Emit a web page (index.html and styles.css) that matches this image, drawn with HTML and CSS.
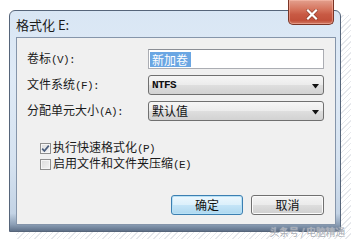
FILE: index.html
```html
<!DOCTYPE html>
<html lang="zh">
<head>
<meta charset="utf-8">
<title>格式化 E:</title>
<link rel="stylesheet" href="styles.css">
</head>
<body>
<div class="page">
  <div class="window">
    <div class="titlebar">
      <span class="title">格式化 E:</span>
      <div class="close">
        <svg width="12" height="11" viewBox="0 0 12 11">
          <path d="M2 1.5 L10 9.5 M10 1.5 L2 9.5" stroke="#5a2418" stroke-width="3.6" stroke-linecap="square" fill="none" opacity="0.5"/>
          <path d="M2 1.5 L10 9.5 M10 1.5 L2 9.5" stroke="#ffffff" stroke-width="2.2" stroke-linecap="square" fill="none"/>
        </svg>
      </div>
    </div>
    <div class="client">
      <div class="form">
        <div class="row">
          <span class="label">卷标<span class="m">(V):</span></span>
          <div class="input"><span class="selected">新加卷</span></div>
        </div>
        <div class="row">
          <span class="label">文件系统<span class="m">(F):</span></span>
          <div class="combo">
            <span class="m value">NTFS</span>
            <svg class="arrow" width="7" height="5" viewBox="0 0 7 5"><path d="M0 0 H7 L3.5 4.5 Z" fill="#111"/></svg>
          </div>
        </div>
        <div class="row">
          <span class="label">分配单元大小<span class="m">(A):</span></span>
          <div class="combo">
            <span class="value">默认值</span>
            <svg class="arrow" width="7" height="5" viewBox="0 0 7 5"><path d="M0 0 H7 L3.5 4.5 Z" fill="#111"/></svg>
          </div>
        </div>
      </div>
      <div class="checks">
        <div class="check">
          <span class="box">
            <svg width="9" height="9" viewBox="0 0 9 9"><path d="M1.2 4.6 L3.4 7 L7.8 1.6" stroke="#4a5d7c" stroke-width="1.7" fill="none"/></svg>
          </span>
          <span>执行快速格式化<span class="m">(P)</span></span>
        </div>
        <div class="check">
          <span class="box"></span>
          <span>启用文件和文件夹压缩<span class="m">(E)</span></span>
        </div>
      </div>
      <div class="buttons">
        <button class="btn btn-default">确定</button>
        <button class="btn btn-cancel">取消</button>
      </div>
    </div>
  </div>
  <div class="watermark">头条号 / 电脑精通</div>
</div>
</body>
</html>
```

FILE: styles.css
```css
html, body {
  margin: 0;
  padding: 0;
  background: #ffffff;
}

.page {
  position: relative;
  z-index: 0;
  width: 351px;
  height: 239px;
  overflow: hidden;
  background: #ffffff;
  font-family: "Noto Sans CJK SC", "Noto Sans", sans-serif;
  color: #1a1a1a;
}

.m {
  font-family: "Liberation Mono", monospace;
  font-size: 11px;
  letter-spacing: -0.6px;
}

.window {
  position: relative;
  box-sizing: border-box;
  width: 332px;
  height: 222px;
  margin: 10px 0 0 9px;
  padding: 0 4px 6px 6px;
  border: 1px solid #56657a;
  border-radius: 6px 6px 0 0;
  background: linear-gradient(180deg, #d9e6f4 0%, #dfeaf6 30%, #d5e2f0 70%, #c3d3e5 92%, #8c9fb6 97%, #5f7189 100%);
}

.window::before {
  content: "";
  position: absolute;
  left: 6px;
  top: 4px;
  right: -12px;
  bottom: -10px;
  z-index: -1;
  background: repeating-linear-gradient(135deg, #ffffff 0 3px, #e6e8ec 3px 4px);
}

.titlebar {
  display: flex;
  align-items: center;
  justify-content: space-between;
  height: 26px;
}

.title {
  font-size: 13px;
  line-height: 14px;
  color: #1a1a1a;
  margin-top: 1px;
}

.close {
  align-self: flex-start;
  box-sizing: border-box;
  width: 46px;
  height: 25px;
  margin-top: -11px;
  margin-right: 2px;
  display: flex;
  align-items: flex-end;
  justify-content: center;
  padding-bottom: 4px;
  padding-left: 2px;
  border: 1px solid #7a3425;
  border-top: none;
  border-radius: 0 0 5px 5px;
  background: linear-gradient(180deg, #e3a08e 0%, #d5735c 40%, #c85a44 60%, #c2503a 85%, #d17a64 100%);
  box-shadow: inset 0 0 0 1px rgba(255, 200, 185, 0.45);
}

.client {
  box-sizing: border-box;
  height: 188px;
  border: 1px solid #8595aa;
  background: #f0f0f0;
  padding: 11px 11px 9px 10px;
  font-size: 12px;
}

.form {
  display: flex;
  flex-direction: column;
  gap: 6px;
}

.row {
  display: flex;
  align-items: center;
  height: 20px;
}

.label {
  width: 121px;
  line-height: 14px;
  white-space: nowrap;
}

.input {
  box-sizing: border-box;
  width: 176px;
  height: 20px;
  border: 1px solid #abadb3;
  border-top-color: #8b8e95;
  background: #ffffff;
  display: flex;
  align-items: center;
  padding-left: 1px;
}

.selected {
  display: inline-block;
  background: #6aa6e3;
  color: #ffffff;
  line-height: 15px;
  height: 15px;
  padding: 0 3px 0 2px;
}

.combo {
  box-sizing: border-box;
  width: 176px;
  height: 20px;
  border: 1px solid #707070;
  border-radius: 3px;
  background: linear-gradient(180deg, #f6f6f6 0%, #ececec 48%, #dedede 52%, #d2d2d2 100%);
  display: flex;
  align-items: center;
  justify-content: space-between;
  padding: 0 4px 0 3px;
  line-height: 14px;
}

.value {
  color: #101010;
}

.value.m {
  font-weight: bold;
}

.arrow {
  margin-top: 2px;
}

.checks {
  margin-top: 19px;
  display: flex;
  flex-direction: column;
}

.check {
  display: flex;
  align-items: center;
  height: 16px;
  padding-left: 13px;
  line-height: 14px;
  white-space: nowrap;
}

.box {
  box-sizing: border-box;
  width: 11px;
  height: 11px;
  margin-right: 2px;
  border: 1px solid #8f8f8f;
  background: linear-gradient(135deg, #dcdcdc 0%, #f4f4f4 100%);
  box-shadow: inset 0 0 0 1px #f6f6f6;
  display: flex;
  align-items: center;
  justify-content: center;
}

.buttons {
  margin-top: 23px;
  display: flex;
  justify-content: flex-end;
  gap: 8px;
}

.btn {
  box-sizing: border-box;
  height: 20px;
  padding: 0;
  font-family: "Noto Sans CJK SC", "Noto Sans", sans-serif;
  font-size: 12px;
  line-height: 14px;
  color: #111111;
  border-radius: 3px;
}

.btn-default {
  width: 72px;
  border: 1px solid #3c7fb1;
  background: linear-gradient(180deg, #edf7fd 0%, #dcf0fb 48%, #c4e4f7 52%, #aed7ef 100%);
  box-shadow: inset 0 0 0 1px #b8e1f6;
}

.btn-cancel {
  width: 73px;
  border: 1px solid #707070;
  background: linear-gradient(180deg, #f4f4f4 0%, #ebebeb 48%, #dddddd 52%, #cfcfcf 100%);
  box-shadow: inset 0 0 0 1px #fbfbfb;
}

.watermark {
  position: absolute;
  right: 6px;
  bottom: 2px;
  font-size: 10px;
  line-height: 11px;
  color: rgba(150, 155, 165, 0.85);
  text-shadow: 0 0 1px #ffffff;
  letter-spacing: -0.3px;
}
```
